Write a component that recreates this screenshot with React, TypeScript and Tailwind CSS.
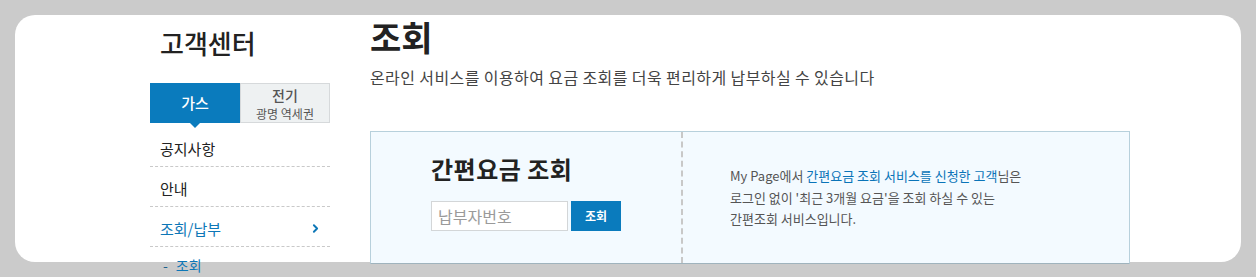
import { ChevronRight } from 'lucide-react';

const font = "font-['Noto_Sans_CJK_KR','Noto_Sans',sans-serif]";

function Sidebar() {
  return (
    <aside className="w-[180px] shrink-0 pt-[13px]">
      <h2 className="text-[26px] leading-[30px] font-medium text-[#222] pl-[10px]">고객센터</h2>

      <div className="mt-[25px] flex h-[40px]">
        <div className="relative flex w-[90px] items-center justify-center bg-[#0a7bbd] text-[15px] font-medium text-white">
          가스
          <span className="absolute left-[40px] top-[40px] h-0 w-0 border-x-[5px] border-t-[5px] border-x-transparent border-t-[#0a7bbd]" />
        </div>
        <div className="flex w-[90px] flex-col items-center justify-center border border-[#d6d9db] bg-[#eef1f2] text-[#555]">
          <span className="text-[14px] leading-[20px] font-medium">전기</span>
          <span className="text-[12px] leading-[17px]">광명 역세권</span>
        </div>
      </div>

      <ul className="mt-[4px] text-[15px]">
        <li className="border-b border-dashed border-[#c9c9c9] pl-[10px] pt-[12px] pb-[8px] leading-[19px] text-[#222]">공지사항</li>
        <li className="border-b border-dashed border-[#c9c9c9] pl-[10px] pt-[12px] pb-[8px] leading-[19px] text-[#222]">안내</li>
        <li className="flex items-center justify-between border-b border-dashed border-[#c9c9c9] pl-[10px] pr-[8px] pt-[12px] pb-[8px] leading-[19px] text-[#0d77b7]">
          <span>조회/납부</span>
          <ChevronRight size={13} strokeWidth={3.5} className="text-[#0d77b7]" />
        </li>
        <li className="pl-[13px] pt-[9px] text-[14px] leading-[19px] text-[#0d77b7]">
          <span className="text-[#1a5f8c]">-</span>
          <span className="ml-[8px]">조회</span>
        </li>
      </ul>
    </aside>
  );
}

function QuickBox() {
  return (
    <div className="mt-[44px] flex h-[133px] border border-[#b7d0dc] border-b-[#9fb3bd] bg-[#f3faff]">
      <div className="w-[310px] shrink-0 pl-[60px] pt-[23px]">
        <h3 className="text-[24px] leading-[28px] font-bold text-[#222] tracking-[0.5px]">간편요금 조회</h3>
        <div className="mt-[18px] flex gap-[3px]">
          <input
            placeholder="납부자번호"
            className="h-[30px] w-[137px] border border-[#d3d6d8] bg-white px-[6px] text-[16px] text-[#333] outline-none placeholder:text-[#9a9a9a]"
          />
          <button className="h-[30px] w-[50px] bg-[#0a7bbd] text-[12px] font-bold text-white">조회</button>
        </div>
      </div>
      <div className="border-l-2 border-dashed border-[#c8c8c8] pl-[47px] pt-[33px] text-[13px] leading-[21.5px] text-[#555]">
        <p>
          My Page에서 <span className="text-[#0a74b8]">간편요금 조회 서비스를 신청한 고객</span>님은
        </p>
        <p>로그인 없이 '최근 3개월 요금'을 조회 하실 수 있는</p>
        <p>간편조회 서비스입니다.</p>
      </div>
    </div>
  );
}

export default function App() {
  return (
    <div className={`${font} h-[277px] overflow-hidden bg-[#cbcbcb] px-[15px] pt-[15px]`}>
      <div className="flex h-[247px] rounded-[20px] bg-white pl-[135px]">
        <Sidebar />
        <main className="ml-[40px] w-[760px] shrink-0 pt-[2px]">
          <h1 className="text-[34px] leading-[40px] font-bold text-[#222]">조회</h1>
          <p className="mt-[10px] text-[16px] leading-[20px] tracking-[0.4px] text-[#444]">
            온라인 서비스를 이용하여 요금 조회를 더욱 편리하게 납부하실 수 있습니다
          </p>
          <QuickBox />
        </main>
      </div>
    </div>
  );
}
